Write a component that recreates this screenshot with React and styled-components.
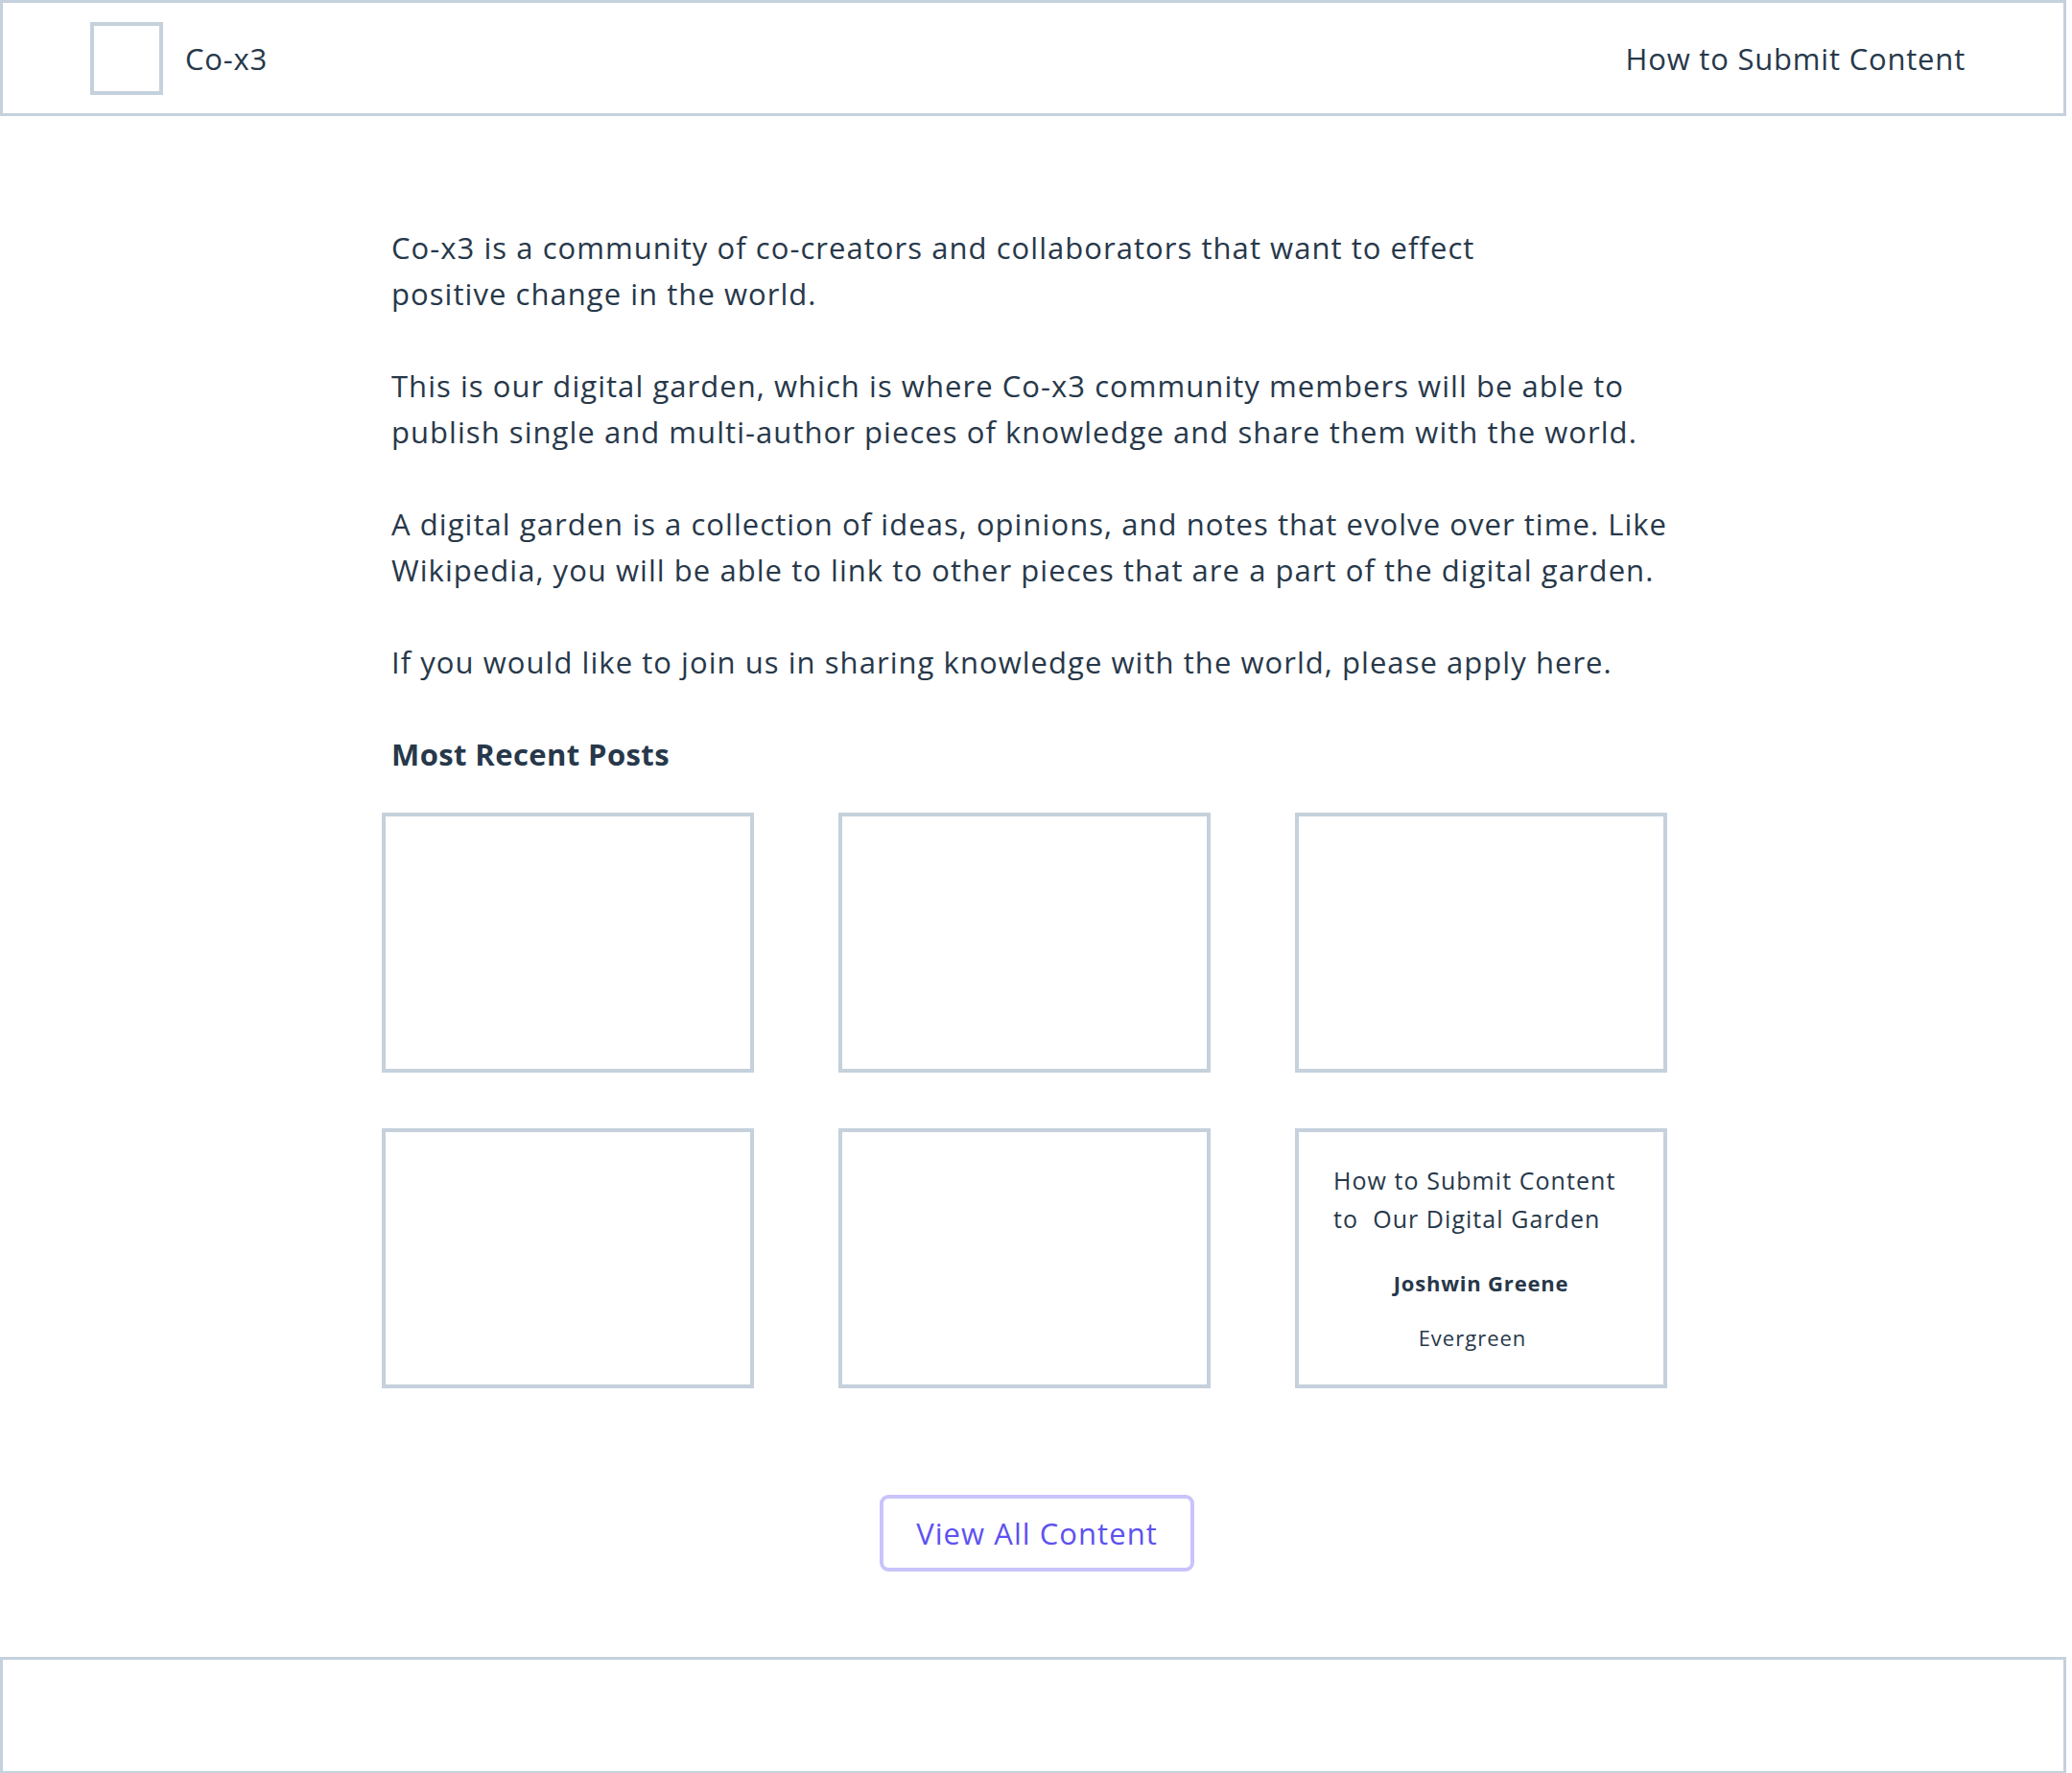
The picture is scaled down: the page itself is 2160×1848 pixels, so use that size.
import styled, { createGlobalStyle } from "styled-components";

const GlobalStyle = createGlobalStyle`
  html, body {
    margin: 0;
    padding: 0;
    background: #ffffff;
  }
  body {
    font-family: "Open Sans", "Liberation Sans", sans-serif;
    font-weight: 500;
    color: #27384a;
  }
  * {
    box-sizing: border-box;
  }
`;

const Page = styled.div`
  width: 2154px;
  min-height: 1848px;
  display: flex;
  flex-direction: column;
`;

const Header = styled.header`
  height: 121px;
  border: 3px solid #c5d1dc;
  display: flex;
  align-items: center;
  justify-content: space-between;
  padding: 0 102px 0 91px;
`;

const Brand = styled.div`
  display: flex;
  align-items: center;
  gap: 23px;
`;

const LogoBox = styled.div`
  width: 76px;
  height: 76px;
  border: 4px solid #c5d1dc;
`;

const NavText = styled.span`
  font-size: 31px;
  line-height: 40px;
  letter-spacing: 0.8px;
`;

const Main = styled.main`
  flex: 1;
  padding: 113px 0 0 398px;
`;

const Content = styled.div`
  width: 1340px;
  display: flex;
  flex-direction: column;
`;

const Paragraph = styled.p`
  margin: 0 0 48px;
  padding-left: 10px;
  font-size: 31px;
  line-height: 48px;
  letter-spacing: 1.05px;
  white-space: nowrap;
`;

const SectionTitle = styled.h2`
  margin: 0 0 37px;
  padding-left: 10px;
  font-size: 31px;
  line-height: 48px;
  letter-spacing: 0.4px;
  font-weight: 700;
`;

const Grid = styled.div`
  display: grid;
  grid-template-columns: repeat(3, 388px);
  grid-auto-rows: 271px;
  column-gap: 88px;
  row-gap: 58px;
`;

const Card = styled.div`
  border: 4px solid #c5d1dc;
  padding: 30px 36px 0;
  display: flex;
  flex-direction: column;
`;

const CardTitle = styled.div`
  font-size: 25px;
  line-height: 40px;
  letter-spacing: 1.05px;
  white-space: pre;
`;

const Author = styled.div`
  margin-top: 27px;
  font-size: 22px;
  line-height: 40px;
  letter-spacing: 0.8px;
  font-weight: 700;
  text-align: center;
`;

const Stage = styled.div`
  margin-top: 17px;
  padding-right: ${(p) => p.$shift || 0}px;
  font-size: 22px;
  line-height: 40px;
  letter-spacing: 1px;
  text-align: center;
`;

const ButtonRow = styled.div`
  display: flex;
  justify-content: center;
  padding-left: 8px;
  margin: 111px 0 89px;
`;

const ViewButton = styled.button`
  width: 328px;
  height: 80px;
  border: 4px solid #c9c4fb;
  border-radius: 9px;
  background: #ffffff;
  color: #5d51f1;
  font-family: "Open Sans", "Liberation Sans", sans-serif;
  font-weight: 500;
  font-size: 31px;
  letter-spacing: 1.05px;
  cursor: pointer;
`;

const Footer = styled.footer`
  height: 122px;
  border: 3px solid #c5d1dc;
`;

const posts = [
  null,
  null,
  null,
  null,
  null,
  {
    title: "How to Submit Content\nto\u00a0 Our Digital Garden",
    author: "Joshwin Greene",
    stage: "Evergreen",
  },
];

export default function App() {
  return (
    <>
      <GlobalStyle />
      <Page>
        <Header>
          <Brand>
            <LogoBox />
            <NavText>Co-x3</NavText>
          </Brand>
          <NavText>How to Submit Content</NavText>
        </Header>
        <Main>
          <Content>
            <Paragraph>
              Co-x3 is a community of co-creators and collaborators that want to effect
              <br />
              positive change in the world.
            </Paragraph>
            <Paragraph>
              This is our digital garden, which is where Co-x3 community members will be able to
              <br />
              publish single and multi-author pieces of knowledge and share them with the world.
            </Paragraph>
            <Paragraph>
              A digital garden is a collection of ideas, opinions, and notes that evolve over time. Like
              <br />
              Wikipedia, you will be able to link to other pieces that are a part of the digital garden.
            </Paragraph>
            <Paragraph>
              If you would like to join us in sharing knowledge with the world, please apply here.
            </Paragraph>
            <SectionTitle>Most Recent Posts</SectionTitle>
            <Grid>
              {posts.map((post, i) => (
                <Card key={i}>
                  {post && (
                    <>
                      <CardTitle>{post.title}</CardTitle>
                      <Author>{post.author}</Author>
                      <Stage $shift={18}>{post.stage}</Stage>
                    </>
                  )}
                </Card>
              ))}
            </Grid>
          </Content>
        </Main>
        <ButtonRow>
          <ViewButton>View All Content</ViewButton>
        </ButtonRow>
        <Footer />
      </Page>
    </>
  );
}
